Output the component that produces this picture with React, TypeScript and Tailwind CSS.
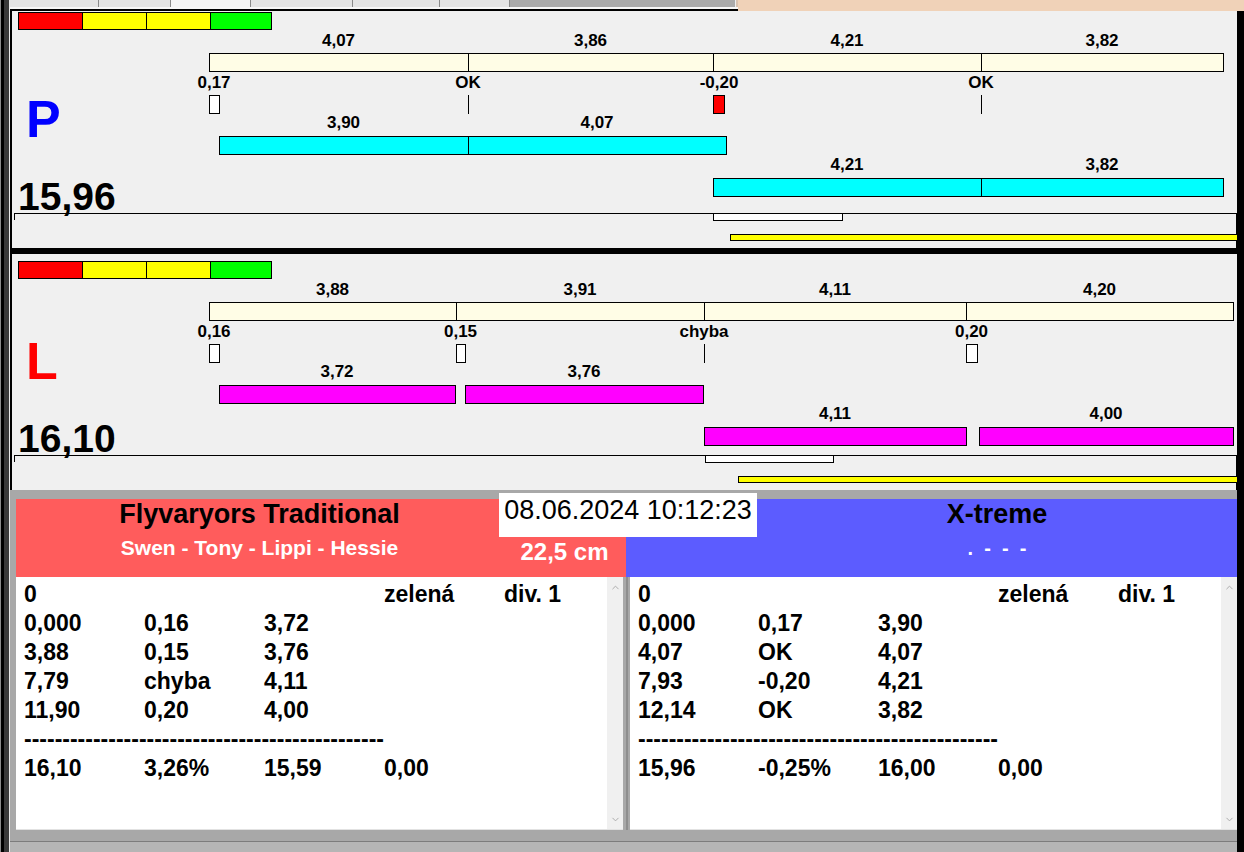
import { ChevronDown, ChevronUp } from 'lucide-react'

type Label = [number, string]
type Bar = { x0: number; x1: number; dividers?: number[] }
type Marker = { x0: number; x1: number; kind: 'box' | 'red' | 'tick' }
type Lane = { labelY: number; labels: Label[]; barY: number; bars: Bar[]; fill: string }

type ChartSpec = {
  top: number
  height: number
  lanes: Lane[]
  markLabelY: number
  markLabels: Label[]
  markerY: number
  markers: Marker[]
  axisY: number
  progress: [number, number]
  yellowY: number
  yellowX: number
}

const CREAM = '#fffde6'

const upperChart: ChartSpec = {
  top: 11,
  height: 237,
  lanes: [
    {
      labelY: 45.5,
      labels: [[338.5, '4,07'], [590.5, '3,86'], [847, '4,21'], [1102, '3,82']],
      barY: 53,
      bars: [{ x0: 209, x1: 1223, dividers: [468, 713, 981] }],
      fill: CREAM,
    },
    {
      labelY: 127.5,
      labels: [[343.5, '3,90'], [597, '4,07']],
      barY: 136,
      bars: [{ x0: 219, x1: 726, dividers: [468] }],
      fill: '#00ffff',
    },
    {
      labelY: 170,
      labels: [[847, '4,21'], [1102, '3,82']],
      barY: 178,
      bars: [{ x0: 713, x1: 1223, dividers: [981] }],
      fill: '#00ffff',
    },
  ],
  markLabelY: 88,
  markLabels: [[214, '0,17'], [468, 'OK'], [719, '-0,20'], [981, 'OK']],
  markerY: 95,
  markers: [
    { x0: 209, x1: 219, kind: 'box' },
    { x0: 468, x1: 468, kind: 'tick' },
    { x0: 713, x1: 724, kind: 'red' },
    { x0: 981, x1: 981, kind: 'tick' },
  ],
  axisY: 213,
  progress: [713, 842],
  yellowY: 234,
  yellowX: 730,
}

const lowerChart: ChartSpec = {
  top: 254,
  height: 236,
  lanes: [
    {
      labelY: 294.5,
      labels: [[332.5, '3,88'], [580, '3,91'], [835, '4,11'], [1099.5, '4,20']],
      barY: 302,
      bars: [{ x0: 209, x1: 1233, dividers: [456, 704, 966] }],
      fill: CREAM,
    },
    {
      labelY: 376.5,
      labels: [[337, '3,72'], [584, '3,76']],
      barY: 385,
      bars: [
        { x0: 219, x1: 455 },
        { x0: 465, x1: 703 },
      ],
      fill: '#ff00ff',
    },
    {
      labelY: 419,
      labels: [[835, '4,11'], [1106, '4,00']],
      barY: 427,
      bars: [
        { x0: 704, x1: 966 },
        { x0: 979, x1: 1233 },
      ],
      fill: '#ff00ff',
    },
  ],
  markLabelY: 337,
  markLabels: [[214, '0,16'], [460.5, '0,15'], [704, 'chyba'], [971.5, '0,20']],
  markerY: 344,
  markers: [
    { x0: 209, x1: 219, kind: 'box' },
    { x0: 456, x1: 465, kind: 'box' },
    { x0: 704, x1: 704, kind: 'tick' },
    { x0: 966, x1: 977, kind: 'box' },
  ],
  axisY: 455,
  progress: [705, 833],
  yellowY: 476,
  yellowX: 738,
}

function ChartText({ x, y, children }: { x: number; y: number; children: string }) {
  return (
    <text x={x} y={y} textAnchor="middle" fontSize={17} fontWeight="bold" fill="#000">
      {children}
    </text>
  )
}

function Chart({ spec }: { spec: ChartSpec }) {
  const bottom = spec.top + spec.height
  return (
    <svg
      className="absolute inset-0"
      width={1225}
      height={spec.height}
      viewBox={`12 ${spec.top} 1225 ${spec.height}`}
    >
      {spec.lanes.map((lane, i) => (
        <g key={i}>
          {lane.labels.map(([x, text]) => (
            <ChartText key={text + x} x={x} y={lane.labelY}>
              {text}
            </ChartText>
          ))}
          {lane.bars.map((bar) => (
            <g key={bar.x0}>
              <rect
                x={bar.x0 + 0.5}
                y={lane.barY + 0.5}
                width={bar.x1 - bar.x0}
                height={18}
                fill={lane.fill}
                stroke="#000"
              />
              {bar.dividers?.map((d) => (
                <line key={d} x1={d + 0.5} x2={d + 0.5} y1={lane.barY} y2={lane.barY + 19} stroke="#000" />
              ))}
            </g>
          ))}
        </g>
      ))}

      {spec.markLabels.map(([x, text]) => (
        <ChartText key={text + x} x={x} y={spec.markLabelY}>
          {text}
        </ChartText>
      ))}
      {spec.markers.map((m) =>
        m.kind === 'tick' ? (
          <line
            key={m.x0}
            x1={m.x0 + 0.5}
            x2={m.x0 + 0.5}
            y1={spec.markerY}
            y2={spec.markerY + 19}
            stroke="#000"
          />
        ) : (
          <rect
            key={m.x0}
            x={m.x0 + 0.5}
            y={spec.markerY + 0.5}
            width={m.x1 - m.x0}
            height={18}
            fill={m.kind === 'red' ? '#ff0000' : '#ffffff'}
            stroke="#000"
          />
        ),
      )}

      <line x1={14} x2={1237} y1={spec.axisY + 0.5} y2={spec.axisY + 0.5} stroke="#000" />
      <line x1={1236.5} x2={1236.5} y1={spec.axisY} y2={bottom} stroke="#000" />
      <line x1={14.5} x2={14.5} y1={spec.axisY} y2={spec.axisY + 7} stroke="#000" />
      <rect
        x={spec.progress[0] + 0.5}
        y={spec.axisY + 0.5}
        width={spec.progress[1] - spec.progress[0]}
        height={7}
        fill="#ffffff"
        stroke="#000"
      />
      <rect
        x={spec.yellowX + 0.5}
        y={spec.yellowY + 0.5}
        width={1237 - spec.yellowX}
        height={6}
        fill="#ffff00"
        stroke="#000"
      />
    </svg>
  )
}

function ColorScale() {
  return (
    <div className="flex h-[18px] w-[254px] border border-black">
      <div className="w-[63px] bg-[#ff0000]" />
      <div className="w-[64px] border-l border-black bg-[#ffff00]" />
      <div className="w-[64px] border-l border-black bg-[#ffff00]" />
      <div className="flex-1 border-l border-black bg-[#00ff00]" />
    </div>
  )
}

function Edge() {
  return (
    <div className="flex w-[10px] shrink-0">
      <div className="w-px bg-[#8c8c8c]" />
      <div className="w-[3px] bg-black" />
      <div className="w-[5px] bg-[#3a3a3a]" />
      <div className="w-px bg-[#e8e8e8]" />
    </div>
  )
}

const leftRows = [
  ['0', '', '', 'zelená', 'div. 1'],
  ['0,000', '0,16', '3,72'],
  ['3,88', '0,15', '3,76'],
  ['7,79', 'chyba', '4,11'],
  ['11,90', '0,20', '4,00'],
  null,
  ['16,10', '3,26%', '15,59', '0,00'],
]

const rightRows = [
  ['0', '', '', 'zelená', 'div. 1'],
  ['0,000', '0,17', '3,90'],
  ['4,07', 'OK', '4,07'],
  ['7,93', '-0,20', '4,21'],
  ['12,14', 'OK', '3,82'],
  null,
  ['15,96', '-0,25%', '16,00', '0,00'],
]

function ResultTable({ rows, className }: { rows: (string[] | null)[]; className: string }) {
  return (
    <div className={`flex border-b border-[#e2e2e2] bg-white ${className}`}>
      <div className="min-w-0 flex-1 overflow-hidden pl-[8px] pt-[3px] text-[23px] font-bold leading-[29px] text-black">
        {rows.map((row, i) =>
          row ? (
            <div key={i} className="flex h-[29px] whitespace-nowrap">
              {row.map((cell, j) => (
                <span key={j} className="w-[120px] shrink-0">
                  {cell}
                </span>
              ))}
            </div>
          ) : (
            <div key={i} className="h-[29px] whitespace-nowrap">
              {'-'.repeat(47)}
            </div>
          ),
        )}
      </div>
      <div className="flex w-[16px] shrink-0 flex-col items-center justify-between bg-[#f0f0f0] pb-[4px] pt-[5px] text-[#a6a6a6]">
        <ChevronUp size={11} strokeWidth={2} />
        <ChevronDown size={11} strokeWidth={2} />
      </div>
    </div>
  )
}

export default function App() {
  return (
    <div className="flex h-[852px] w-[1244px] flex-col overflow-hidden bg-[#a8a8a8] font-['Liberation_Sans',Arial,sans-serif]">
      {/* tab strip */}
      <div className="flex h-[11px] shrink-0">
        <Edge />
        <div className="flex w-[728px] flex-col">
          <div className="flex h-[7px]">
            <div className="w-[89px] border-r border-[#8a8a8a] bg-[#e4e4e4]" />
            <div className="w-[72px] border-r border-[#8a8a8a] bg-[#e4e4e4]" />
            <div className="w-[80px] border-r border-[#8a8a8a] bg-[#f4f4f4]" />
            <div className="w-[102px] border-r border-[#8a8a8a] bg-[#e4e4e4]" />
            <div className="w-[87px] border-r border-[#8a8a8a] bg-[#e4e4e4]" />
            <div className="w-[70px] border-r border-[#8a8a8a] bg-[#e4e4e4]" />
            <div className="w-[225px] bg-[#ababab]" />
            <div className="flex-1 border-l border-[#ededed] bg-[#d8c2b0]" />
          </div>
          <div className="h-[2px] bg-[#f7f7f7]" />
          <div className="h-[2px] bg-black" />
        </div>
        <div className="flex-1 bg-[#f0d2b8]" />
      </div>

      <div className="flex min-h-0 flex-1">
        <Edge />
        <div className="flex w-[1227px] flex-col">
          {/* P lane */}
          <section className="relative h-[237px] shrink-0 border-l-2 border-black bg-[#f0f0f0]">
            <Chart spec={upperChart} />
            <div className="relative flex flex-col items-start pl-[6px] pt-[1px]">
              <ColorScale />
              <div className="mt-[63px] pl-[8px] text-[52px] font-bold leading-[52px] text-[#0000ff]">P</div>
              <div className="mt-[32px] text-[39px] font-bold leading-[39px] text-black">15,96</div>
            </div>
          </section>

          <div className="h-[6px] shrink-0 bg-black" />

          {/* L lane */}
          <section className="relative h-[236px] shrink-0 border-l-2 border-black bg-[#f0f0f0]">
            <Chart spec={lowerChart} />
            <div className="relative flex flex-col items-start pl-[6px] pt-[7px]">
              <ColorScale />
              <div className="mt-[56px] pl-[8px] text-[52px] font-bold leading-[52px] text-[#ff0000]">L</div>
              <div className="mt-[32px] text-[39px] font-bold leading-[39px] text-black">16,10</div>
            </div>
          </section>

          <div className="h-[9px] shrink-0 bg-[#a8a8a8]" />

          {/* score board */}
          <section className="flex h-[331px] shrink-0 flex-col pl-[6px]">
            <div className="relative flex h-[78px] shrink-0">
              <div className="flex w-[610px] shrink-0 bg-[#ff5c5c]">
                <div className="flex flex-1 flex-col items-center">
                  <div className="whitespace-nowrap text-[27px] font-bold leading-[30px] text-black">
                    Flyvaryors Traditional
                  </div>
                  <div className="mt-[7px] whitespace-nowrap text-[21px] font-bold leading-[24px] text-white">
                    Swen - Tony - Lippi - Hessie
                  </div>
                </div>
                <div className="w-[123px] pt-[39px] text-center text-[24px] font-bold leading-[28px] text-white">
                  22,5 cm
                </div>
              </div>
              <div className="flex flex-1 bg-[#5c5cff]">
                <div className="w-[131px]" />
                <div className="flex flex-1 flex-col items-center">
                  <div className="text-[27px] font-bold leading-[30px] text-black">X-treme</div>
                  <div className="mt-[7px] whitespace-pre text-[20px] font-bold leading-[24px] text-white">
                    .  -  -  -
                  </div>
                </div>
              </div>
              <div className="absolute left-[483px] top-[-6px] h-[44px] w-[258px] whitespace-nowrap bg-white pt-[2px] text-center text-[27px] leading-[30px] text-black">
                08.06.2024 10:12:23
              </div>
            </div>

            <div className="flex h-[253px] shrink-0">
              <ResultTable rows={leftRows} className="w-[607px] shrink-0" />
              <div className="flex w-[7px] shrink-0 justify-center bg-[#a8a8a8]">
                <div className="w-[2px] bg-[#8e8e8e]" />
              </div>
              <ResultTable rows={rightRows} className="min-w-0 flex-1" />
            </div>
          </section>

          <div className="flex flex-1 flex-col">
            <div className="h-[11px] bg-[#a8a8a8]" />
            <div className="h-px bg-[#7c7c7c]" />
            <div className="flex-1 bg-[#b5b5b5]" />
          </div>
        </div>
        <div className="flex-1 bg-black" />
      </div>
    </div>
  )
}
